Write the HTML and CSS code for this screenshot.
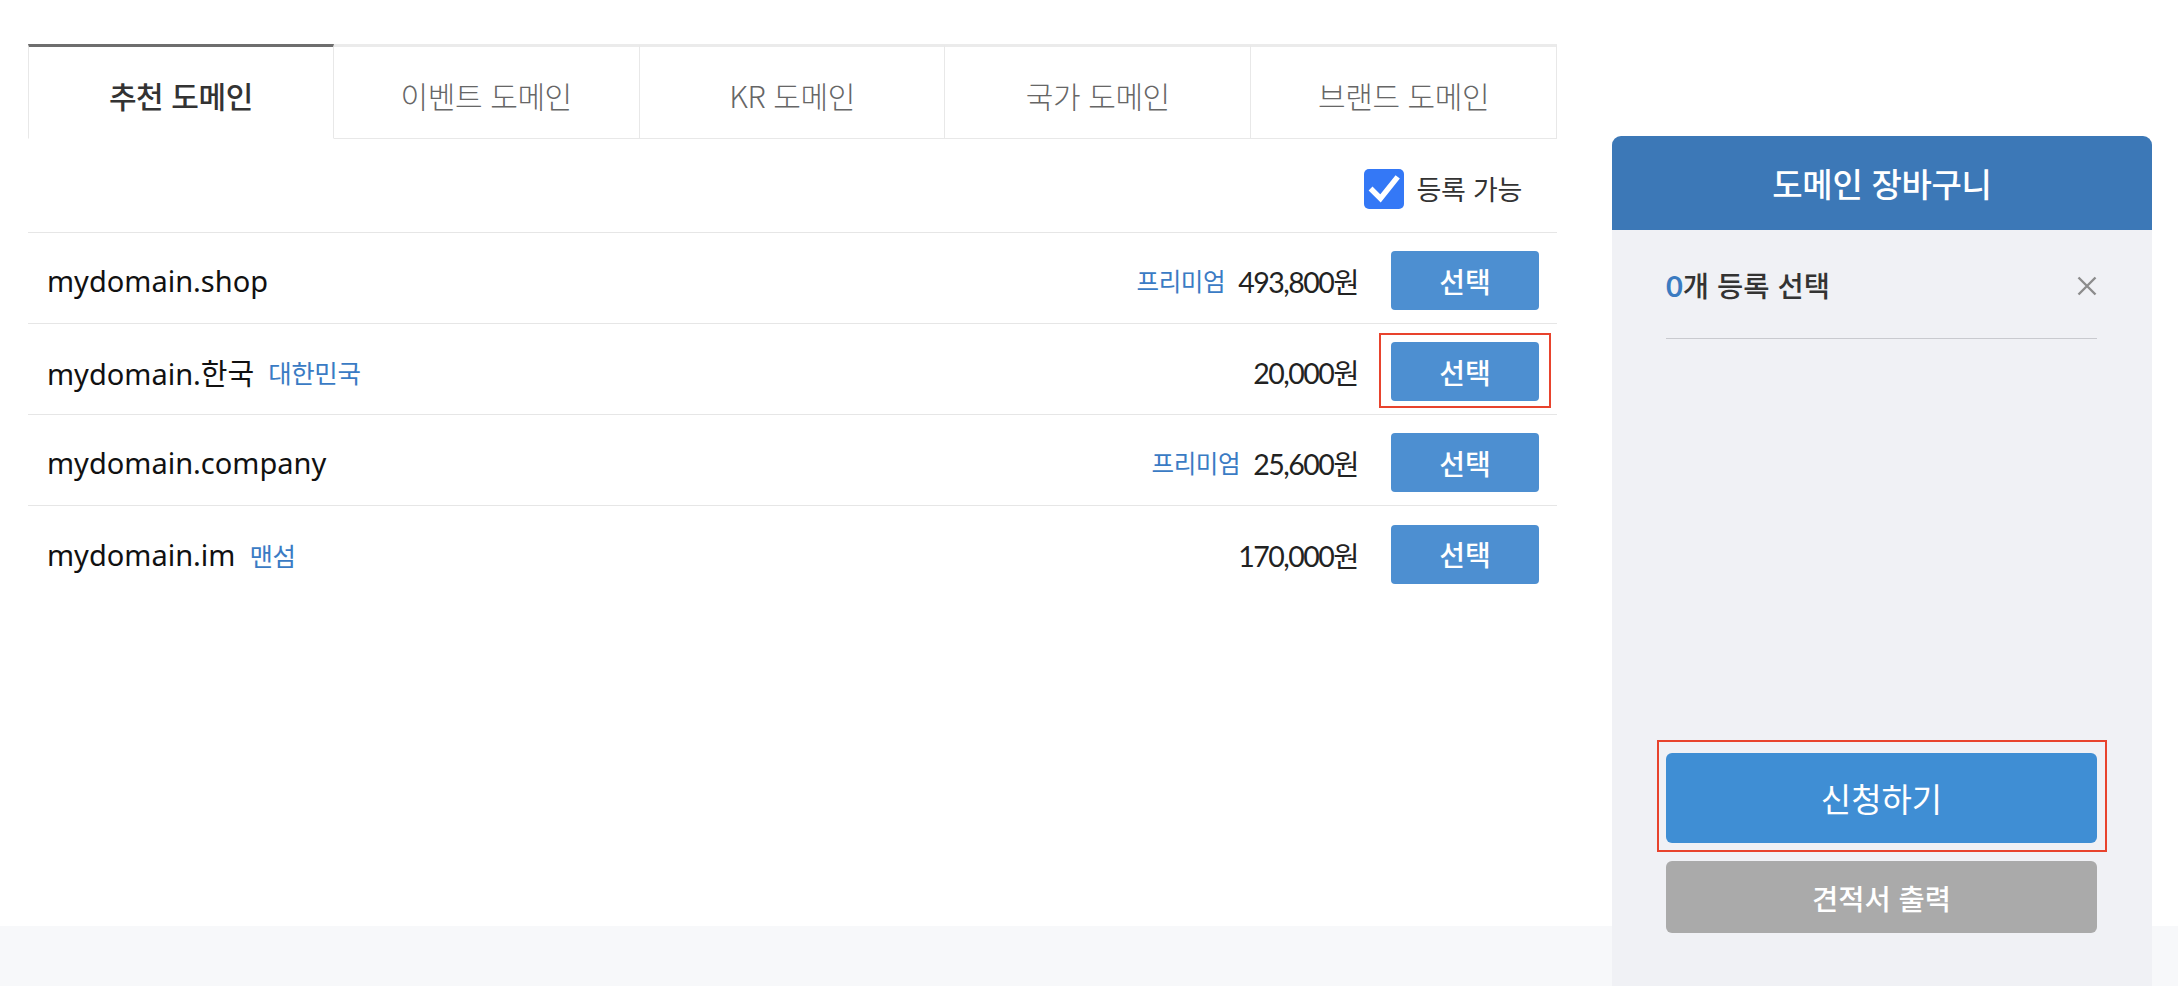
FILE: index.html
```html
<!DOCTYPE html>
<html lang="ko">
<head>
<meta charset="utf-8">
<title>도메인 검색</title>
<link rel="stylesheet" href="styles.css">
</head>
<body>
<div class="page">
  <main class="main">
    <div class="content">
      <nav class="tabs">
        <a class="tab active">추천 도메인</a>
        <a class="tab">이벤트 도메인</a>
        <a class="tab">KR 도메인</a>
        <a class="tab">국가 도메인</a>
        <a class="tab">브랜드 도메인</a>
      </nav>
      <div class="filter">
        <label class="check">
          <span class="box"><svg width="40" height="40" viewBox="0 0 40 40"><path d="M8.5 21.5 L16.5 29.5 L32 10" fill="none" stroke="#fff" stroke-width="5.5" stroke-linecap="square"/></svg></span>
          <span class="check-label">등록 가능</span>
        </label>
      </div>
      <ul class="list">
        <li class="row">
          <div class="name">mydomain.shop</div>
          <div class="meta"><span class="tag">프리미엄</span><span class="price">493,800원</span></div>
          <button class="select">선택</button>
        </li>
        <li class="row">
          <div class="name">mydomain.한국<span class="tag inline">대한민국</span></div>
          <div class="meta"><span class="price">20,000원</span></div>
          <button class="select marked">선택</button>
        </li>
        <li class="row">
          <div class="name">mydomain.company</div>
          <div class="meta"><span class="tag">프리미엄</span><span class="price">25,600원</span></div>
          <button class="select">선택</button>
        </li>
        <li class="row">
          <div class="name">mydomain.im<span class="tag inline">맨섬</span></div>
          <div class="meta"><span class="price">170,000원</span></div>
          <button class="select">선택</button>
        </li>
      </ul>
    </div>
  </main>
  <footer class="band"></footer>
</div>
<aside class="cart">
  <div class="cart-head">도메인 장바구니</div>
  <div class="cart-body">
    <div class="count">
      <span><b class="num">0</b>개 등록 선택</span>
      <span class="close"><svg width="20" height="20" viewBox="0 0 20 20"><path d="M1.5 1.5 L18.5 18.5 M18.5 1.5 L1.5 18.5" stroke="#8c8c8c" stroke-width="2.4" fill="none"/></svg></span>
    </div>
    <div class="actions">
      <button class="apply marked">신청하기</button>
      <button class="quote">견적서 출력</button>
    </div>
  </div>
</aside>
</body>
</html>
```

FILE: styles.css
```css
* { box-sizing: border-box; margin: 0; padding: 0; }
html, body { background: #fff; }
body {
  font-family: "Noto Sans CJK KR", "Noto Sans", sans-serif;
  color: #222;
  width: 2178px;
  height: 986px;
  overflow: hidden;
  position: relative;
}
.page { display: flex; flex-direction: column; height: 986px; }
.main { height: 926px; padding: 44px 0 0 28px; }
.content { width: 1529px; }
.band { flex: 1; background: #f7f8fa; }

.tabs { display: grid; grid-template-columns: repeat(5, 1fr); height: 95px; }
.tab {
  display: flex; align-items: center; justify-content: center;
  padding-top: 4px;
  border-top: 3px solid #ebebeb;
  border-right: 1px solid #e8e8e8;
  border-bottom: 1px solid #e8e8e8;
  font-size: 30px; letter-spacing: -0.4px;
  color: #666; font-weight: 300;
}
.tab.active {
  border-top-color: #6e6e6e;
  border-left: 1px solid #e8e8e8;
  border-bottom-color: transparent;
  color: #333; font-weight: 500;
}

.filter {
  display: flex; justify-content: flex-end; align-items: center;
  height: 94px; padding: 6px 35px 0 0;
  border-bottom: 1px solid #e6e6e6;
}
.check { display: flex; align-items: center; gap: 13px; }
.box { width: 40px; height: 40px; border-radius: 5px; background: #3478f6; display: block; }
.box svg { display: block; }
.check-label { font-size: 27px; color: #333; letter-spacing: -0.3px; }

.list { list-style: none; }
.row {
  display: flex; align-items: center;
  height: 91px; padding: 5px 18px 0 19px;
  border-bottom: 1px solid #e6e6e6;
}
.row:last-child { border-bottom: none; }
.name {
  flex: 1;
  font-family: "Noto Sans", "Noto Sans CJK KR", sans-serif;
  font-size: 29px; color: #111;
  display: flex; align-items: center;
}
.tag {
  font-family: "Noto Sans CJK KR", sans-serif;
  font-size: 24.5px; color: #3a7bc4; letter-spacing: -0.4px;
}
.tag.inline { margin-left: 14px; font-size: 25.5px; }
.meta { display: flex; align-items: center; gap: 13px; margin-right: 33px; }
.price {
  font-family: Lato, "Noto Sans CJK KR", sans-serif;
  font-size: 28.5px; letter-spacing: -1.5px; color: #222;
}
.select {
  position: relative;
  width: 148px; height: 59px;
  border: none; border-radius: 4px;
  background: #4d8fd1; color: #fff;
  font-family: "Noto Sans CJK KR", sans-serif;
  font-size: 28px; font-weight: 500;
}
.marked::after {
  content: "";
  position: absolute;
  border: 2px solid #e8432d;
  pointer-events: none;
}
.select.marked::after { left: -12px; right: -12px; top: -9px; bottom: -7px; }

.cart {
  position: absolute;
  left: 1612px; top: 136px;
  width: 540px; height: 850px;
  background: #f0f1f5;
  border-radius: 9px 9px 0 0;
  display: flex; flex-direction: column;
}
.cart-head {
  height: 94px; flex: none;
  background: #3c78b7; color: #fff;
  border-radius: 9px 9px 0 0;
  display: flex; align-items: center; justify-content: center;
  font-size: 33px; font-weight: 500; letter-spacing: -0.3px;
}
.cart-body {
  flex: 1;
  display: flex; flex-direction: column;
  padding: 0 55px 53px 54px;
}
.count {
  display: flex; justify-content: space-between; align-items: center;
  padding: 38px 0 35px;
  line-height: 34px;
  border-bottom: 1px solid #c9cacf;
  font-size: 28.5px; font-weight: 500; color: #333;
}
.num { font-family: Lato, sans-serif; font-weight: 700; color: #3b7bc1; font-size: 29px; }
.close svg { display: block; }
.actions { margin-top: auto; display: flex; flex-direction: column; gap: 18px; }
.actions button {
  position: relative;
  border: none; border-radius: 6px;
  font-family: "Noto Sans CJK KR", sans-serif;
  color: #fff;
}
.apply { height: 90px; background: #3f8ed4; font-size: 33px; font-weight: 400; }
.quote { height: 72px; background: #aaaaaa; color: #f8f8f8; font-size: 28.5px; font-weight: 500; }
.apply.marked::after { left: -9px; right: -10px; top: -13px; bottom: -9px; }
```
